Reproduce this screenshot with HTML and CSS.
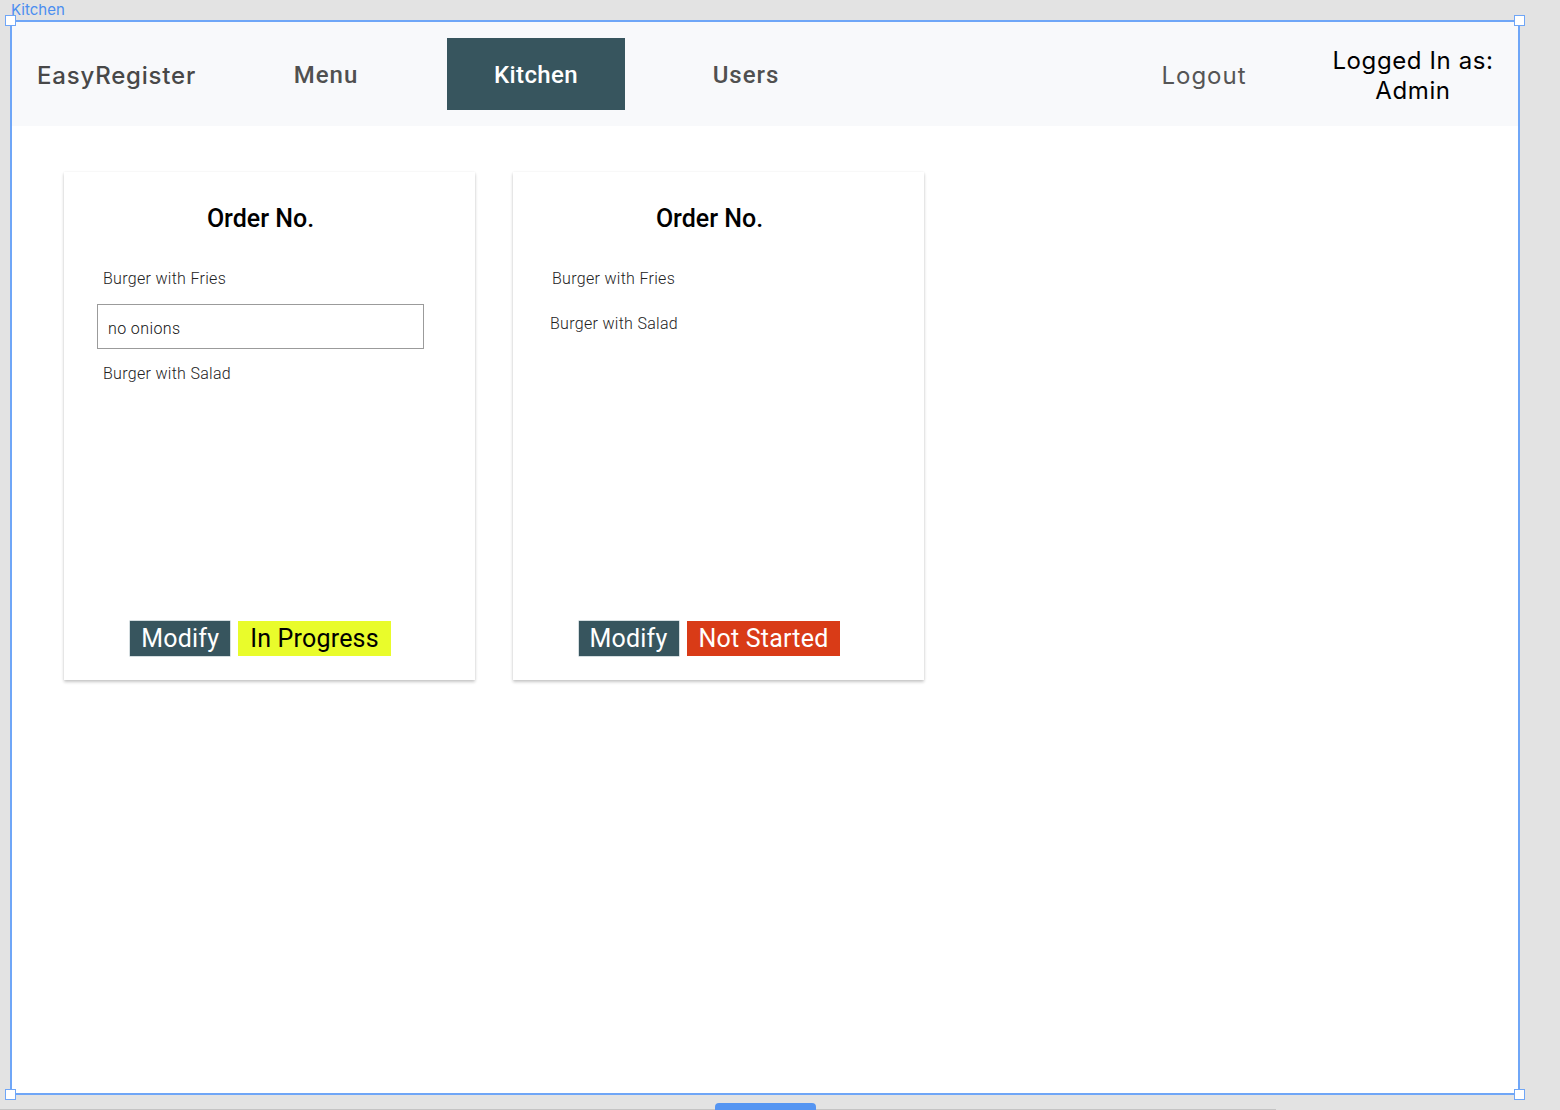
FILE: index.html
```html
<!DOCTYPE html>
<html lang="en">
<head>
<meta charset="utf-8">
<title>Kitchen</title>
<link rel="stylesheet" href="styles.css">
</head>
<body>
<div class="canvas">
  <div class="frame-label">Kitchen</div>
  <div class="frame">
    <span class="handle handle-tl"></span>
    <span class="handle handle-tr"></span>
    <span class="handle handle-bl"></span>
    <span class="handle handle-br"></span>
    <header class="topbar">
      <div class="brand">EasyRegister</div>
      <nav class="nav">
        <a class="tab">Menu</a>
        <a class="tab tab-active">Kitchen</a>
        <a class="tab">Users</a>
      </nav>
      <div class="logout">Logout</div>
      <div class="logged">Logged In as:<br>Admin</div>
    </header>
    <main class="orders">
      <section class="card">
        <h2 class="card-title">Order No.</h2>
        <div class="item">Burger with Fries</div>
        <div class="note">no onions</div>
        <div class="item">Burger with Salad</div>
        <div class="actions">
          <span class="btn btn-modify">Modify</span>
          <span class="btn btn-progress">In Progress</span>
        </div>
      </section>
      <section class="card">
        <h2 class="card-title">Order No.</h2>
        <div class="item">Burger with Fries</div>
        <div class="item item-shift">Burger with Salad</div>
        <div class="actions">
          <span class="btn btn-modify">Modify</span>
          <span class="btn btn-notstarted">Not Started</span>
        </div>
      </section>
    </main>
  </div>
  <div class="bottom">
    <span class="size-pill"></span>
  </div>
</div>
</body>
</html>
```

FILE: styles.css
```css
* { box-sizing: border-box; }
html, body {
  margin: 0;
  padding: 0;
  background: #e3e3e3;
  overflow: hidden;
}
.canvas {
  width: 1560px;
  height: 1110px;
  padding-left: 10px;
  font-family: "Roboto", "Liberation Sans", sans-serif;
}
.frame-label {
  height: 20px;
  line-height: 20px;
  padding-left: 1px;
  font-family: "Inter", "Liberation Sans", sans-serif;
  font-size: 15px;
  color: #4b8ef0;
}
.frame {
  position: relative;
  width: 1510px;
  height: 1075px;
  border: 2px solid #6fa6f7;
  background: #ffffff;
}
.handle {
  position: absolute;
  width: 11px;
  height: 11px;
  background: #ffffff;
  border: 1.5px solid #6fa6f7;
  z-index: 2;
}
.handle-tl { left: -7px; top: -7px; }
.handle-tr { right: -7px; top: -7px; }
.handle-bl { left: -7px; bottom: -7px; }
.handle-br { right: -7px; bottom: -7px; }

.topbar {
  display: flex;
  align-items: center;
  height: 104px;
  padding-left: 25px;
  padding-right: 10px;
  background: #f8f9fb;
}
.brand {
  width: 200px;
  padding-top: 2px;
  font-family: "Inter", "Liberation Sans", sans-serif;
  font-weight: 500;
  font-size: 24px;
  letter-spacing: 0.8px;
  color: #484848;
}
.nav {
  display: flex;
  gap: 32px;
}
.tab {
  display: flex;
  align-items: center;
  justify-content: center;
  width: 178px;
  height: 72px;
  padding-top: 2px;
  font-family: "Roboto", "Liberation Sans", sans-serif;
  font-weight: 500;
  font-size: 24px;
  letter-spacing: 1px;
  color: #505050;
}
.tab-active {
  background: #37555e;
  color: #ffffff;
  letter-spacing: 0.4px;
}
.logout {
  margin-left: auto;
  width: 178px;
  padding-top: 2px;
  text-align: center;
  font-family: "Inter", "Liberation Sans", sans-serif;
  font-size: 24px;
  letter-spacing: 1px;
  color: #555555;
}
.logged {
  width: 190px;
  margin-left: 25px;
  padding-top: 4px;
  text-align: center;
  font-family: "Inter", "Liberation Sans", sans-serif;
  font-size: 24px;
  line-height: 30px;
  letter-spacing: 0.6px;
  color: #000000;
}

.orders {
  display: flex;
  gap: 38px;
  padding: 46px 0 0 52px;
}
.card {
  display: flex;
  flex-direction: column;
  width: 411px;
  height: 508px;
  padding: 33px 51px 24px 33px;
  background: #ffffff;
  box-shadow: 0 2px 3px rgba(0, 0, 0, 0.22), 0 0 2px rgba(0, 0, 0, 0.06);
}
.card-title {
  margin: 0;
  text-align: center;
  font-family: "Roboto", "Liberation Sans", sans-serif;
  font-weight: 500;
  font-size: 25px;
  line-height: 28px;
  color: #000000;
}
.item {
  margin-top: 36px;
  padding-left: 6px;
  font-family: "Roboto", "Liberation Sans", sans-serif;
  font-weight: 300;
  font-size: 16px;
  line-height: 20px;
  letter-spacing: 0.3px;
  color: #222222;
}
.note {
  margin-top: 15px;
  height: 45px;
  padding: 14px 0 0 10px;
  border: 1px solid #9b9b9b;
  font-family: "Roboto", "Liberation Sans", sans-serif;
  font-weight: 300;
  font-size: 16px;
  line-height: 20px;
  letter-spacing: 0.4px;
  color: #111111;
}
.note + .item { margin-top: 15px; }
.item + .item { margin-top: 25px; }
.item-shift { padding-left: 4px; }
.actions {
  margin-top: auto;
  display: flex;
  justify-content: center;
  gap: 8px;
}
.btn {
  display: inline-block;
  height: 35px;
  line-height: 35px;
  padding: 0 11px;
  font-family: "Roboto", "Liberation Sans", sans-serif;
  font-size: 25px;
  font-weight: 400;
  letter-spacing: 0.2px;
}
.btn-modify {
  background: #37555e;
  color: #ffffff;
  box-shadow: 0 0 0 0.5px #a9bcc2;
}
.btn-progress {
  background: #e9fc2b;
  color: #000000;
  padding: 0 12px;
}
.btn-notstarted {
  background: #d93b17;
  color: #ffffff;
  padding: 0 12px;
}

.bottom {
  position: relative;
  height: 15px;
  border-bottom: 1px solid #c4c4c4;
  width: 1276px;
  margin-left: -10px;
}
.size-pill {
  position: absolute;
  left: 715px;
  top: 8px;
  width: 101px;
  height: 12px;
  border-radius: 4px;
  background: #5595f2;
}
```
